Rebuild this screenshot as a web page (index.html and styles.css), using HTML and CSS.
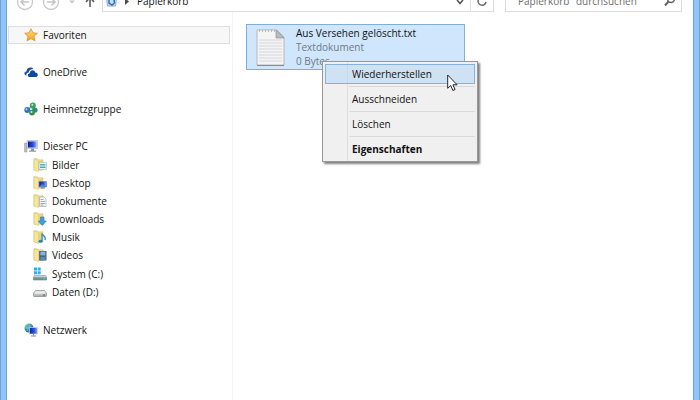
FILE: index.html
```html
<!DOCTYPE html>
<html lang="de">
<head>
    <meta charset="UTF-8">
    <meta name="viewport" content="width=device-width, initial-scale=1.0">
    <title>Papierkorb</title>
    <link rel="stylesheet" href="styles.css">
</head>
<body>

<svg class="icon-defs" aria-hidden="true">
    <defs>
        <linearGradient id="gold" x1="0" x2="1">
            <stop offset="0" stop-color="#ead27a"/>
            <stop offset=".5" stop-color="#faf0b8"/>
            <stop offset="1" stop-color="#dfc469"/>
        </linearGradient>
        <linearGradient id="star" x1="0" y1="0" x2="0" y2="1">
            <stop offset="0" stop-color="#ffe680"/>
            <stop offset="1" stop-color="#f59c1c"/>
        </linearGradient>
        <linearGradient id="metal" x1="0" y1="0" x2="0" y2="1">
            <stop offset="0" stop-color="#f2f2f2"/>
            <stop offset="1" stop-color="#a4a8ab"/>
        </linearGradient>
        <linearGradient id="screen" x1="0" x2="1">
            <stop offset="0" stop-color="#101b9c"/>
            <stop offset=".6" stop-color="#2f4fe0"/>
            <stop offset="1" stop-color="#8fb0ff"/>
        </linearGradient>
        <radialGradient id="globe" cx=".35" cy=".3" r=".8">
            <stop offset="0" stop-color="#b9ecff"/>
            <stop offset=".5" stop-color="#2c9ac9"/>
            <stop offset="1" stop-color="#0c4f86"/>
        </radialGradient>
        <symbol id="folder" viewBox="0 0 14 14">
            <path d="M1 .8h3.500l1 1H10V12H1z" fill="url(#gold)" stroke="#dcc573" stroke-width=".6"/>
            <path d="M1 .8l4.500 1.500v11.200L1 12z" fill="#f5e69b" stroke="#d5bb60" stroke-width=".5"/>
            <path d="M6 2.500H9.500v10H6z" fill="#e9d37c"/>
        </symbol>
    </defs>
</svg>

<div class="window">
    <div class="pane">
        <header class="toolbar">
            <nav class="history">
                <button aria-label="Zurück">
                    <svg width="18" height="18" viewBox="0 0 18 18"><circle cx="9" cy="9" r="7.500" fill="#fff" stroke="#c9c9c9" stroke-width="1.300"/><path d="M13 9H5.500M8.500 5.500L5 9l3.500 3.500" fill="none" stroke="#c4c4c4" stroke-width="1.500"/></svg>
                </button>
                <button aria-label="Vorwärts">
                    <svg width="18" height="18" viewBox="0 0 18 18"><circle cx="9" cy="9" r="7.500" fill="#fff" stroke="#c9c9c9" stroke-width="1.300"/><path d="M5 9h7.500M9.500 5.500L13 9l-3.500 3.500" fill="none" stroke="#c4c4c4" stroke-width="1.500"/></svg>
                </button>
                <button aria-label="Verlauf">
                    <svg width="8" height="18" viewBox="0 0 8 18"><path d="M1 7.500h6L4 10.500z" fill="#c9c9c9"/></svg>
                </button>
                <button aria-label="Nach oben">
                    <svg width="12" height="18" viewBox="0 0 12 18"><path d="M6 14V5M2 9l4-4.500L10 9" fill="none" stroke="#5c5c5c" stroke-width="1.600"/></svg>
                </button>
            </nav>
            <div class="address">
                <svg width="14" height="18" viewBox="0 0 14 18"><path d="M2 1h11l-1.500 13h-8z" fill="#c6dff5" stroke="#92adc6"/><path d="M5 11V8l2-2 3 1 .5 4-2.500 2z" fill="none" stroke="#2f71c8" stroke-width="1.500"/></svg>
                <svg width="6" height="18" viewBox="0 0 6 18"><path d="M1 6l4 3.500L1 13z" fill="#4d4d4d"/></svg>
                <a href="#" class="crumb">Papierkorb</a>
                <button aria-label="Vorherige Orte">
                    <svg width="8" height="18" viewBox="0 0 8 18"><path d="M1 8l3 3.500L7 8" fill="none" stroke="#555" stroke-width="1.600"/></svg>
                </button>
                <button class="refresh" aria-label="Aktualisieren">
                    <svg width="12" height="18" viewBox="0 0 12 18"><path d="M9 6.500A4 4 0 1 0 10 10" fill="none" stroke="#666" stroke-width="1.400"/><path d="M6.500 7H10V3.500z" fill="#666"/></svg>
                </button>
            </div>
            <label class="search">
                <input type="text" placeholder="&quot;Papierkorb&quot; durchsuchen" aria-label="Papierkorb durchsuchen">
                <svg width="12" height="18" viewBox="0 0 12 18"><circle cx="7" cy="7" r="3.500" fill="none" stroke="#666" stroke-width="1.400"/><path d="M4.500 9.500L1 13.500" stroke="#666" stroke-width="2"/></svg>
            </label>
        </header>

        <div class="body">
            <nav class="sidebar">
                <a href="#" class="row selected">
                    <svg width="14" height="14" viewBox="0 0 14 14"><path d="M7 .8l1.900 4 4.400.5-3.300 3 .9 4.500L7 10.600l-3.900 2.200.9-4.500-3.300-3 4.400-.5z" fill="url(#star)" stroke="#d98e2b" stroke-width=".8"/></svg>
                    Favoriten
                </a>
                <a href="#" class="row">
                    <svg width="14" height="14" viewBox="0 0 14 14"><path d="M2.500 10.500C-.5 10 0 6.500 2.500 6.500 2.500 3 7 1 9.500 4c-3 0-4.500 1.500-4.800 3.500C2.800 7.500 2 9 2.500 10.500z" fill="#1650a8"/><path d="M5.500 12C3 11.500 3.500 8.300 5.600 8.400 6 4.500 10.500 4.200 11.200 7.500c3 0 3.500 4.100.8 4.500z" fill="#0e4aa0"/></svg>
                    OneDrive
                </a>
                <a href="#" class="row">
                    <svg width="14" height="14" viewBox="0 0 14 14"><path d="M4 8l4-4 2 6z" fill="none" stroke="#77a9c9" stroke-width="1.500"/><circle cx="3.200" cy="8" r="2.900" fill="#3475bd"/><circle cx="2.500" cy="7.200" r="1" fill="#b7dcf5"/><circle cx="8.800" cy="3.600" r="3" fill="#39a35a"/><circle cx="8.300" cy="2.800" r="1" fill="#c7f0c9"/><circle cx="11" cy="8" r="2.600" fill="#2b8b7d"/><circle cx="8" cy="10.600" r="2.900" fill="#38903d"/><circle cx="7.500" cy="10" r="1" fill="#d5f4cf"/></svg>
                    Heimnetzgruppe
                </a>
                <a href="#" class="row">
                    <svg width="14" height="14" viewBox="0 0 14 14"><path d="M.5 4h2.500v9H.5z" fill="#b9bfc5" stroke="#949ba2" stroke-width=".5"/><path d="M3 1.500h10.500v8H3z" fill="#d6dae0" stroke="#a2a8b5" stroke-width=".5"/><path d="M4 2.500h8.500v6H4z" fill="url(#screen)"/><path d="M7 9.500h3v2H7zM5 11.500h7v1.200H5z" fill="#8f98a2"/></svg>
                    Dieser PC
                </a>
                <ul class="children">
                    <li><a href="#" class="row">
                        <svg width="14" height="14" viewBox="0 0 14 14"><use href="#folder"/><path d="M6 4.500h7.500v7H6z" fill="#eef7fc" stroke="#98b6c4" stroke-width=".6"/><path d="M7 6h5.500v1.500H7z" fill="#58a7cf"/><path d="M7 8.500h5.500V10H7z" fill="#69a377"/></svg>
                        Bilder
                    </a></li>
                    <li><a href="#" class="row">
                        <svg width="14" height="14" viewBox="0 0 14 14"><use href="#folder"/><path d="M6 5.500h7.500V11H6z" fill="url(#screen)" stroke="#70819c" stroke-width=".7"/><path d="M6 11l3-3 4.500 3z" fill="#3c91cb"/><path d="M8 12h4" stroke="#777"/></svg>
                        Desktop
                    </a></li>
                    <li><a href="#" class="row">
                        <svg width="14" height="14" viewBox="0 0 14 14"><use href="#folder"/><path d="M6.500 3h4.500l2 2v7.500H6.500z" fill="#f5f7fb" stroke="#a5adba" stroke-width=".7"/><path d="M7.500 5.500h3M7.500 7.500h4.500M7.500 9.500h4.500M7.500 11h3" stroke="#8796bb" stroke-width=".8"/></svg>
                        Dokumente
                    </a></li>
                    <li><a href="#" class="row">
                        <svg width="14" height="14" viewBox="0 0 14 14"><use href="#folder"/><path d="M7.500 5H11v4h2.300l-4 4.500L5.200 9h2.300z" fill="#3d9fe0" stroke="#2379b8" stroke-width=".6"/></svg>
                        Downloads
                    </a></li>
                    <li><a href="#" class="row">
                        <svg width="14" height="14" viewBox="0 0 14 14"><use href="#folder"/><path d="M9 11V3.500c.5 2.500 4.500 2.500 3 6.500" fill="none" stroke="#3797c4" stroke-width="1.400"/><ellipse cx="7.500" cy="11.200" rx="2" ry="1.500" fill="#2d84b5"/></svg>
                        Musik
                    </a></li>
                    <li><a href="#" class="row">
                        <svg width="14" height="14" viewBox="0 0 14 14"><use href="#folder"/><path d="M6 3h7.500v9.500H6z" fill="#3c4854"/><path d="M7.300 3.500h5v4h-5z" fill="#7db7e2"/><path d="M7.300 8.500h5v3.500h-5z" fill="#4f8cbb"/><path d="M6.600 3.500v9M13 3.500v9" stroke="#dbe4ea" stroke-width=".6" stroke-dasharray="1 1"/></svg>
                        Videos
                    </a></li>
                </ul>
                <ul class="children">
                    <li><a href="#" class="row">
                        <svg width="14" height="14" viewBox="0 0 14 14"><path d="M1 .5h3v3H1zM4.700.5h3v3h-3zM1 4.200h3v3H1zM4.700 4.200h3v3h-3z" fill="#25b4e8"/><path d="M1.500 8.500h11l1.300 2v2.500H.3v-2.500z" fill="#78909c" stroke="#5c717b" stroke-width=".5"/><path d="M1.500 8.500h11l1 1.700H.7z" fill="#c3d2d8"/><path d="M10.500 11.700h2" stroke="#62e06c"/></svg>
                        System (C:)
                    </a></li>
                    <li><a href="#" class="row">
                        <svg width="14" height="14" viewBox="0 0 14 14"><path d="M2.500 5.500h9l2 2.700v2.500q0 .8-.8.8H1.300q-.8 0-.8-.8V8.200z" fill="url(#metal)" stroke="#83878a" stroke-width=".7"/><path d="M1.500 8h11" stroke="#fff" stroke-width=".8"/><path d="M10 10h2" stroke="#4d565b"/></svg>
                        Daten (D:)
                    </a></li>
                </ul>
                <a href="#" class="row">
                    <svg width="14" height="14" viewBox="0 0 14 14"><circle cx="5" cy="5" r="4.500" fill="url(#globe)"/><path d="M2 3q2-2 3.500-1L5 4 3 5zM2 7l2 0 1 2z" fill="#69b45e"/><path d="M5.500 4.500h8v6.500h-8z" fill="url(#screen)" stroke="#cfd6df" stroke-width=".7"/><path d="M9.500 11v1.500M7 13h5" stroke="#7e8993"/></svg>
                    Netzwerk
                </a>
            </nav>

            <main class="files">
                <button class="tile">
                    <svg width="30" height="40" viewBox="0 0 30 40">
                        <path d="M1 3h20l7 7v28H1z" fill="#f4f4f4" stroke="#b4b8bb"/>
                        <path d="M3 13h23M3 16h23M3 19h23M3 22h23M3 25h23M3 28h23M3 31h23M3 34h23" stroke="#d4d6d8"/>
                        <path d="M20 3l8 8h-8z" fill="#b7bbbf" stroke="#8e9397" stroke-width=".7"/>
                        <path d="M3.500 2v3M6.500 2v3M9.500 2v3M12.500 2v3M15.500 2v3M18.500 2v3" stroke="#bcbfc2"/>
                        <path d="M1 38.500h27" stroke="#888c8f"/>
                    </svg>
                    <span class="tile-text">
                        <span class="tile-name">Aus Versehen gelöscht.txt</span>
                        <span>Textdokument</span>
                        <span>0 Bytes</span>
                    </span>
                </button>

                <div class="menu" role="menu">
                    <button class="menu-item active" role="menuitem">Wiederherstellen</button>
                    <hr>
                    <button class="menu-item" role="menuitem">Ausschneiden</button>
                    <hr>
                    <button class="menu-item" role="menuitem">Löschen</button>
                    <hr>
                    <button class="menu-item default" role="menuitem">Eigenschaften</button>
                </div>
                <svg class="cursor" width="11" height="18" viewBox="0 0 11 18"><path d="M.7 1v13.300l3-2.800 2.200 5 2.200-1-2.200-4.700h4.200z" fill="#fff" stroke="#1d2733"/></svg>
            </main>
        </div>
    </div>
</div>

</body>
</html>
```
FILE: styles.css
```css
* {
    box-sizing: border-box;
}

body {
    margin: 0;
    font: 10px/14px "Open Sans", "Noto Sans", sans-serif;
    color: #111;
}

button {
    border: 0;
    padding: 0;
    background: none;
    font: inherit;
    color: inherit;
    text-align: left;
}

a {
    color: inherit;
    text-decoration: none;
}

svg {
    display: block;
    flex: none;
}

.icon-defs {
    position: absolute;
    width: 0;
    height: 0;
}

.window {
    display: flex;
    min-height: 100vh;
    padding: 0 5px;
    border: solid #6fa5d6;
    border-width: 0 1px;
    background: #92c3f8;
}

.pane {
    display: flex;
    flex: 1;
    flex-direction: column;
    border: solid #6fa5d6;
    border-width: 0 1px;
    background: #fff;
}

.toolbar {
    display: flex;
    align-items: flex-end;
    height: 12px;
    padding: 0 11px 0 9px;
    overflow: hidden;
}

.history {
    display: flex;
    align-items: center;
    gap: 8px;
    width: 86px;
    height: 20px;
}

.address,
.search {
    display: flex;
    align-items: center;
    height: 22px;
    border: 1px solid #dcdcdc;
}

.address {
    flex: 1;
    gap: 6px;
    padding-left: 1px;
}

.crumb {
    flex: 1;
    padding-left: 1px;
}

.refresh {
    height: 20px;
    padding: 0 5px;
    border-left: 1px solid #e2e2e2;
}

.search {
    width: 177px;
    margin-left: 11px;
    padding: 0 5px 0 8px;
}

.search input {
    flex: 1;
    min-width: 0;
    padding: 0;
    border: 0;
    outline: 0;
    background: none;
    font: inherit;
}

.search input::placeholder {
    color: #6d6d6d;
}

.body {
    display: flex;
    flex: 1;
}

.sidebar {
    width: 226px;
    padding: 14px 2px 0 1px;
    border-right: 1px solid #f3f3f3;
}

.row {
    display: flex;
    align-items: center;
    gap: 5px;
    height: 18px;
    padding-left: 16px;
}

.row + .row {
    margin-top: 19px;
}

.selected {
    border: 1px solid #dedede;
    background: #f7f7f7;
    padding-left: 15px;
}

.children {
    margin: 0;
    padding: 1px 0 0 9px;
    list-style: none;
}

.children + .row {
    margin-top: 20px;
}

.files {
    flex: 1;
    position: relative;
    padding: 12px 13px;
}

.tile {
    display: flex;
    align-items: center;
    gap: 10px;
    width: 219px;
    padding: 1px 8px 1px 9px;
    border: 1px solid #7fafd9;
    background: #cfe6fc;
    color: #6f7a85;
}

.tile-text {
    display: flex;
    flex-direction: column;
}

.tile-name {
    color: #111;
}

.menu {
    position: absolute;
    left: 89px;
    top: 49px;
    width: 156px;
    padding: 2px;
    border: 1px solid #979797;
    background: linear-gradient(90deg, #f0f0f0 24px, #dedede 24px, #dedede 25px, #f0f0f0 25px);
    box-shadow: 2px 2px 2px rgba(0, 0, 0, .5);
}

.menu hr {
    height: 1px;
    margin: 2px 0 2px 24px;
    border: 0;
    background: #d9d9d9;
}

.menu-item {
    display: block;
    width: 100%;
    height: 20px;
    padding: 0 0 1px 26px;
    border: 1px solid transparent;
}

.active {
    border-color: #82b3dc;
    background: rgba(174, 212, 245, .5);
}

.default {
    font-weight: bold;
}

.cursor {
    position: absolute;
    left: 214px;
    top: 62px;
}
```
